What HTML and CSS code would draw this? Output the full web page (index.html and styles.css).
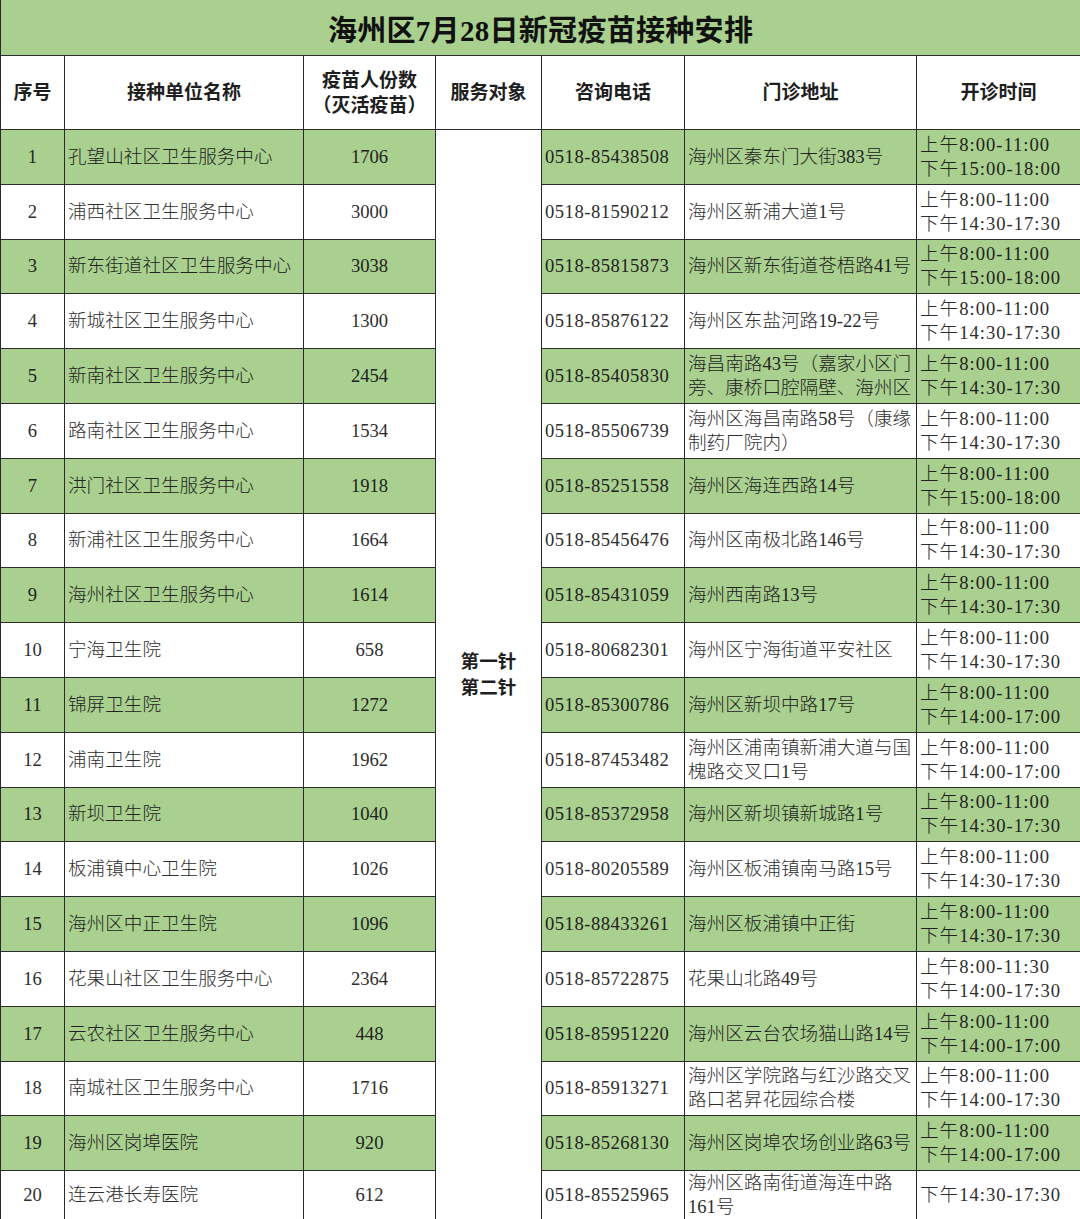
FILE: index.html
```html
<!DOCTYPE html>
<html lang="zh-CN">
<head>
<meta charset="utf-8">
<title>海州区7月28日新冠疫苗接种安排</title>
<link rel="stylesheet" href="styles.css">
</head>
<body>
<table class="sched">
<colgroup>
<col class="c-no"><col class="c-name"><col class="c-qty"><col class="c-target"><col class="c-tel"><col class="c-addr"><col class="c-time">
</colgroup>
<thead>
<tr class="title-row"><th colspan="7" class="title">海州区7月28日新冠疫苗接种安排</th></tr>
<tr class="head-row">
<th>序号</th><th>接种单位名称</th><th>疫苗人份数<br>（灭活疫苗）</th><th>服务对象</th><th>咨询电话</th><th>门诊地址</th><th>开诊时间</th>
</tr>
</thead>
<tbody>
<tr class="g"><td class="no">1</td><td class="name">孔望山社区卫生服务中心</td><td class="qty">1706</td><td class="target" rowspan="20">第一针<br>第二针</td><td class="tel">0518-85438508</td><td class="addr">海州区秦东门大街383号</td><td class="time">上午8:00-11:00<br>下午15:00-18:00</td></tr>
<tr><td class="no">2</td><td class="name">浦西社区卫生服务中心</td><td class="qty">3000</td><td class="tel">0518-81590212</td><td class="addr">海州区新浦大道1号</td><td class="time">上午8:00-11:00<br>下午14:30-17:30</td></tr>
<tr class="g"><td class="no">3</td><td class="name">新东街道社区卫生服务中心</td><td class="qty">3038</td><td class="tel">0518-85815873</td><td class="addr">海州区新东街道苍梧路41号</td><td class="time">上午8:00-11:00<br>下午15:00-18:00</td></tr>
<tr><td class="no">4</td><td class="name">新城社区卫生服务中心</td><td class="qty">1300</td><td class="tel">0518-85876122</td><td class="addr">海州区东盐河路19-22号</td><td class="time">上午8:00-11:00<br>下午14:30-17:30</td></tr>
<tr class="g"><td class="no">5</td><td class="name">新南社区卫生服务中心</td><td class="qty">2454</td><td class="tel">0518-85405830</td><td class="addr">海昌南路43号（嘉家小区门<br>旁、康桥口腔隔壁、海州区</td><td class="time">上午8:00-11:00<br>下午14:30-17:30</td></tr>
<tr><td class="no">6</td><td class="name">路南社区卫生服务中心</td><td class="qty">1534</td><td class="tel">0518-85506739</td><td class="addr">海州区海昌南路58号（康缘<br>制药厂院内）</td><td class="time">上午8:00-11:00<br>下午14:30-17:30</td></tr>
<tr class="g"><td class="no">7</td><td class="name">洪门社区卫生服务中心</td><td class="qty">1918</td><td class="tel">0518-85251558</td><td class="addr">海州区海连西路14号</td><td class="time">上午8:00-11:00<br>下午15:00-18:00</td></tr>
<tr><td class="no">8</td><td class="name">新浦社区卫生服务中心</td><td class="qty">1664</td><td class="tel">0518-85456476</td><td class="addr">海州区南极北路146号</td><td class="time">上午8:00-11:00<br>下午14:30-17:30</td></tr>
<tr class="g"><td class="no">9</td><td class="name">海州社区卫生服务中心</td><td class="qty">1614</td><td class="tel">0518-85431059</td><td class="addr">海州西南路13号</td><td class="time">上午8:00-11:00<br>下午14:30-17:30</td></tr>
<tr><td class="no">10</td><td class="name">宁海卫生院</td><td class="qty">658</td><td class="tel">0518-80682301</td><td class="addr">海州区宁海街道平安社区</td><td class="time">上午8:00-11:00<br>下午14:30-17:30</td></tr>
<tr class="g"><td class="no">11</td><td class="name">锦屏卫生院</td><td class="qty">1272</td><td class="tel">0518-85300786</td><td class="addr">海州区新坝中路17号</td><td class="time">上午8:00-11:00<br>下午14:00-17:00</td></tr>
<tr><td class="no">12</td><td class="name">浦南卫生院</td><td class="qty">1962</td><td class="tel">0518-87453482</td><td class="addr">海州区浦南镇新浦大道与国<br>槐路交叉口1号</td><td class="time">上午8:00-11:00<br>下午14:00-17:00</td></tr>
<tr class="g"><td class="no">13</td><td class="name">新坝卫生院</td><td class="qty">1040</td><td class="tel">0518-85372958</td><td class="addr">海州区新坝镇新城路1号</td><td class="time">上午8:00-11:00<br>下午14:30-17:30</td></tr>
<tr><td class="no">14</td><td class="name">板浦镇中心卫生院</td><td class="qty">1026</td><td class="tel">0518-80205589</td><td class="addr">海州区板浦镇南马路15号</td><td class="time">上午8:00-11:00<br>下午14:30-17:30</td></tr>
<tr class="g"><td class="no">15</td><td class="name">海州区中正卫生院</td><td class="qty">1096</td><td class="tel">0518-88433261</td><td class="addr">海州区板浦镇中正街</td><td class="time">上午8:00-11:00<br>下午14:30-17:30</td></tr>
<tr><td class="no">16</td><td class="name">花果山社区卫生服务中心</td><td class="qty">2364</td><td class="tel">0518-85722875</td><td class="addr">花果山北路49号</td><td class="time">上午8:00-11:30<br>下午14:00-17:30</td></tr>
<tr class="g"><td class="no">17</td><td class="name">云农社区卫生服务中心</td><td class="qty">448</td><td class="tel">0518-85951220</td><td class="addr">海州区云台农场猫山路14号</td><td class="time">上午8:00-11:00<br>下午14:00-17:00</td></tr>
<tr><td class="no">18</td><td class="name">南城社区卫生服务中心</td><td class="qty">1716</td><td class="tel">0518-85913271</td><td class="addr">海州区学院路与红沙路交叉<br>路口茗昇花园综合楼</td><td class="time">上午8:00-11:00<br>下午14:00-17:30</td></tr>
<tr class="g"><td class="no">19</td><td class="name">海州区岗埠医院</td><td class="qty">920</td><td class="tel">0518-85268130</td><td class="addr">海州区岗埠农场创业路63号</td><td class="time">上午8:00-11:00<br>下午14:00-17:00</td></tr>
<tr class="last"><td class="no">20</td><td class="name">连云港长寿医院</td><td class="qty">612</td><td class="tel">0518-85525965</td><td class="addr">海州区路南街道海连中路<br>161号</td><td class="time">下午14:30-17:30</td></tr>
</tbody>
</table>
</body>
</html>
```

FILE: styles.css
```css
html, body {
  margin: 0;
  padding: 0;
  background: #ffffff;
}

.sched {
  width: 1080px;
  table-layout: fixed;
  border-collapse: collapse;
  font-family: "Liberation Serif", "Noto Sans CJK SC", serif;
  color: #2e2e2e;
}

.c-no { width: 64px; }
.c-name { width: 239px; }
.c-qty { width: 132px; }
.c-target { width: 106px; }
.c-tel { width: 143px; }
.c-addr { width: 232px; }
.c-time { width: 164px; }

.sched th,
.sched td {
  border: 1px solid #2a2a2a;
  padding: 0 3px;
  vertical-align: middle;
  white-space: nowrap;
  overflow: hidden;
}

.title-row th {
  height: 55px;
  background: #a9d08e;
  border-top: none;
  font-size: 29px;
  font-weight: 700;
  color: #111111;
  text-align: center;
  letter-spacing: 0.3px;
}

.head-row th {
  height: 73px;
  font-size: 19px;
  font-weight: 700;
  line-height: 25px;
  color: #1e1e1e;
  text-align: center;
}

.sched tbody tr {
  height: 54.8px;
}

.sched tbody tr.last {
  height: 47px;
}

.sched td {
  font-size: 18.6px;
  font-weight: 300;
  line-height: 24px;
}

.sched tr.g td {
  background: #a9d08e;
  color: #222222;
}

.sched tr td.target {
  background: #ffffff;
  text-align: center;
  font-weight: 700;
  font-size: 18.6px;
  line-height: 26px;
  color: #1e1e1e;
}

.no,
.qty {
  text-align: center;
}

.name,
.addr,
.time {
  text-align: left;
}

.tel {
  text-align: left;
  letter-spacing: 0.5px;
}

.time {
  letter-spacing: 1px;
}
```
